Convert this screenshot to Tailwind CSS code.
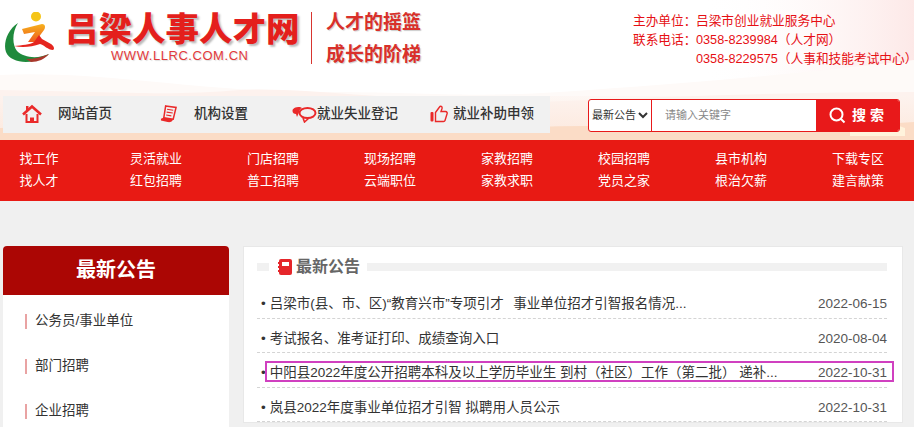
<!DOCTYPE html>
<html lang="zh-CN">
  <head>
    <meta charset="UTF-8" />
    <meta name="viewport" content="width=device-width, initial-scale=1.0" />
    <title>吕梁人事人才网</title>
    <script src="https://cdn.jsdelivr.net/npm/@tailwindcss/browser@4"></script>
  </head>
  <body class="bg-[#f0f0f0] font-['Liberation_Sans','Noto_Sans_CJK_SC',sans-serif] text-[#333]">
    <div class="relative h-[427px] overflow-hidden">

      <!-- header background -->
      <div class="relative h-[140px] bg-white">
        <svg class="absolute left-0 top-0" width="914" height="140" viewBox="0 0 914 140">
          <defs>
            <linearGradient id="corner" x1="0" y1="0" x2="1" y2="0">
              <stop offset="0" stop-color="#fff" stop-opacity="0" />
              <stop offset="1" stop-color="#fbd6d4" />
            </linearGradient>
            <linearGradient id="peach" x1="0" y1="0" x2="0" y2="1">
              <stop offset="0" stop-color="#fdf3ee" />
              <stop offset="1" stop-color="#fbdcc6" />
            </linearGradient>
          </defs>
          <rect x="700" y="0" width="214" height="100" fill="url(#corner)" opacity="0.55" />
          <path d="M0 75 C100 70 200 92 320 92 C420 92 470 98 560 92 C680 84 780 76 914 60 L914 140 L0 140 Z" fill="#fefaf8" />
          <path d="M0 90 C120 92 170 96 240 90 C300 86 420 104 540 102 C680 96 800 92 914 92 L914 140 L0 140 Z" fill="#fdf2ee" />
          <path d="M0 96 L914 96 L914 140 L0 140 Z" fill="url(#peach)" opacity="0.45" />
          <path d="M0 128 C160 124 340 136 500 128 C640 122 760 132 914 122 L914 140 L0 140 Z" fill="#fbdcc6" />
          <path d="M850 130 C870 122 890 122 905 128 L905 136 L850 136 Z" fill="#fff3dc" />
        </svg>

        <div class="relative flex h-[96px] items-start">
          <!-- logo -->
          <svg class="ml-[4px] mt-[12px] shrink-0" width="54" height="54" viewBox="0 0 54 54">
            <defs>
              <linearGradient id="torso" x1="0" y1="0" x2="0" y2="1">
                <stop offset="0" stop-color="#f7b21c" />
                <stop offset="1" stop-color="#ee5a1e" />
              </linearGradient>
            </defs>
            <path d="M14 11 C3 18 -1 32 2 40 C5 48 18 52 30 49 C36 48 42 45 45 42 C34 47 20 46 13 39 C8 33 8 20 14 11 Z" fill="#1f8a3c" />
            <path d="M22 47 C30 47 38 45 45 42 C41 47 34 50 27 50 Z" fill="#a9382c" />
            <circle cx="32" cy="4.5" r="5" fill="#f5c518" />
            <path d="M18 17 L38 12 C41 12 42 15 40 18 L31 30 L24 30 L31 20 L20 22 Z" fill="url(#torso)" />
            <path d="M10 34 C18 33 26 33 30 30 L35 23 L38 27 L47 32 C50 34 51 37 49 38 C44 38 40 33 36 32 C28 35 18 36 10 34 Z" fill="#e5261f" />
          </svg>
          <div class="ml-[7px] mt-[11px] w-[242px] shrink-0">
            <h1 class="whitespace-nowrap text-[33.5px] leading-[38px] font-black text-[#e41f1c] [text-shadow:2px_2px_2px_#bbb]">吕梁人事人才网</h1>
            <p class="ml-[46px] mt-[-1px] whitespace-nowrap text-[13px] leading-[16px] tracking-[0.55px] text-[#e2393a] [text-shadow:1px_1px_1px_#ddd]">WWW.LLRC.COM.CN</p>
          </div>
          <div class="ml-[4px] mt-[12px] h-[52px] w-px shrink-0 bg-[#d8352f]"></div>
          <div class="ml-[14px] mt-[7px] w-[100px] shrink-0 whitespace-nowrap text-[19px] leading-[32px] font-bold text-[#d9302a] [text-shadow:1px_1px_1px_#ccc]">
            <p>人才的摇篮</p>
            <p>成长的阶梯</p>
          </div>
          <div class="ml-[207px] mt-[12px] shrink-0 whitespace-nowrap text-[12.7px] leading-[19px] text-[#e60f14] [text-spacing-trim:trim-both]">
            <div class="flex"><span class="w-[63px]">主办单位：</span><span>吕梁市创业就业服务中心</span></div>
            <div class="flex"><span class="w-[63px]">联系电话：</span><span>0358-8239984（人才网）</span></div>
            <div class="flex"><span class="w-[63px]"></span><span>0358-8229575（人事和技能考试中心）</span></div>
          </div>
        </div>

        <!-- nav + search -->
        <div class="relative flex items-start pl-[3px]">
          <nav class="flex h-[37px] w-[547px] items-center bg-[#f1f1f1] pb-[1px] text-[13.5px] font-medium text-[#333]">
            <a class="flex items-center">
              <svg class="ml-[19px]" width="20" height="20" viewBox="0 0 20 20" fill="none" stroke="#ea2a2a" stroke-width="2">
                <path d="M1 10.5 L10 2.5 L19 10.5" stroke-width="2.6" />
                <path d="M4.5 10 V18 H15.5 V10" />
                <path d="M8 18 V13.5 H12 V18 Z" fill="#ea2a2a" stroke="none" />
                <path d="M4 2 H6.5 V5 L4 7 Z" fill="#ea2a2a" stroke="none" />
              </svg>
              <span class="ml-[16px]">网站首页</span>
            </a>
            <a class="flex items-center">
              <svg class="ml-[48px]" width="17" height="20" viewBox="0 0 18 20" fill="none" stroke="#ea2a2a" stroke-width="1.6">
                <path d="M6 1.5 L17 3 L14 15.5 L4 14 Z" />
                <path d="M1 15 C3 14 4 14 4 14 L14 15.5 C13 18 11 19 8 18.5 L1 17 Z" fill="#ea2a2a" stroke="none" />
                <path d="M7.5 5 L14 6 M7 8 L13.5 9 M6.5 11 L12 12" stroke-width="1.2" />
              </svg>
              <span class="ml-[17px]">机构设置</span>
            </a>
            <a class="flex items-center">
              <svg class="ml-[44px]" width="25" height="18" viewBox="0 0 25 18" fill="none" stroke="#ea2a2a" stroke-width="2">
                <ellipse cx="15.5" cy="8" rx="8" ry="5" />
                <path d="M11 13 L12.5 17 L17 13" stroke-width="1.6" />
                <path d="M8 2 C3 2 0.5 3.5 0.5 6 C0.5 8 2 9 4 9 L5 12 L7 7.5 C7 5.5 8 4 10 3 Z" fill="#ea2a2a" stroke="none" />
              </svg>
              <span>就业失业登记</span>
            </a>
            <a class="flex items-center">
              <svg class="ml-[32px]" width="18" height="18" viewBox="0 0 18 18" fill="none" stroke="#ea2a2a" stroke-width="1.4">
                <rect x="0.5" y="7" width="3" height="9.5" rx="1" fill="#ea2a2a" stroke="none" />
                <path d="M5.5 7.5 L9.5 2 C10.5 0.5 12.5 1.5 12 3.5 L11 6.5 H15.5 C17 6.5 17.5 8 17 9 L15 15.5 C14.8 16.2 14 16.5 13.5 16.5 H5.5 Z" />
              </svg>
              <span class="ml-[5px]">就业补助申领</span>
            </a>
          </nav>

          <form class="ml-[38px] mt-[3px] flex h-[33px] w-[312px] overflow-hidden rounded-[3px] border border-[#e8191a] bg-white">
            <div class="flex w-[63px] shrink-0 items-center border-r border-[#e8191a] pl-[3px] text-[11px] text-[#333]">
              <span class="whitespace-nowrap">最新公告</span>
              <svg class="ml-[2px]" width="10" height="7" viewBox="0 0 10 7" fill="none" stroke="#333" stroke-width="2"><path d="M1 1 L5 5 L9 1" /></svg>
            </div>
            <input class="w-[164px] pl-[13px] text-[11px] outline-none placeholder:text-[#888]" placeholder="请输入关键字" />
            <button class="flex flex-1 items-center bg-[#e8191a] pl-[13px] text-[14px] font-bold text-white" type="button">
              <svg width="17" height="17" viewBox="0 0 17 17" fill="none" stroke="#fff" stroke-width="2"><circle cx="7.5" cy="7.5" r="6" /><path d="M12 12 L15.5 15.5" /></svg>
              <span class="ml-[6px] whitespace-nowrap">搜 索</span>
            </button>
          </form>
        </div>
      </div>

      <!-- red link band -->
      <div class="flex h-[61px] gap-x-[65px] bg-[#e81a14] pl-[13px] pt-[8px] text-[13px] leading-[22px] text-white">
        <div class="w-[52px] shrink-0 whitespace-nowrap text-center"><p>找工作</p><p>找人才</p></div>
        <div class="w-[52px] shrink-0 whitespace-nowrap text-center"><p>灵活就业</p><p>红包招聘</p></div>
        <div class="w-[52px] shrink-0 whitespace-nowrap text-center"><p>门店招聘</p><p>普工招聘</p></div>
        <div class="w-[52px] shrink-0 whitespace-nowrap text-center"><p>现场招聘</p><p>云端职位</p></div>
        <div class="w-[52px] shrink-0 whitespace-nowrap text-center"><p>家教招聘</p><p>家教求职</p></div>
        <div class="w-[52px] shrink-0 whitespace-nowrap text-center"><p>校园招聘</p><p>党员之家</p></div>
        <div class="w-[52px] shrink-0 whitespace-nowrap text-center"><p>县市机构</p><p>根治欠薪</p></div>
        <div class="w-[52px] shrink-0 whitespace-nowrap text-center"><p>下载专区</p><p>建言献策</p></div>
      </div>

      <!-- content -->
      <div class="flex items-start gap-x-[14px] pl-[3px] pt-[45px]">
        <aside class="w-[226px] shrink-0 overflow-hidden rounded-t-[4px] bg-white">
          <h2 class="h-[49px] bg-[#ab0604] text-center text-[20px] leading-[49px] font-bold text-white">最新公告</h2>
          <ul class="pt-[4px] pb-[10px] text-[13.5px] text-[#333]">
            <li class="flex h-[45px] items-center pl-[22px]"><i class="h-[15px] w-[2px] bg-[#e9a3a3]"></i><span class="ml-[8px]">公务员/事业单位</span></li>
            <li class="flex h-[45px] items-center pl-[22px]"><i class="h-[15px] w-[2px] bg-[#e9a3a3]"></i><span class="ml-[8px]">部门招聘</span></li>
            <li class="flex h-[45px] items-center pl-[22px]"><i class="h-[15px] w-[2px] bg-[#e9a3a3]"></i><span class="ml-[8px]">企业招聘</span></li>
          </ul>
        </aside>

        <main class="w-[660px] shrink-0 border border-[#e8e8e8] bg-white pl-[13px] pr-[15px] pt-[9px]">
          <div class="flex h-[22px] items-center">
            <div class="h-[8px] w-[12px] bg-[#f1f1f1]"></div>
            <div class="flex items-center gap-x-[4px] pl-[9px] pr-[7px]">
              <svg width="14" height="16" viewBox="0 0 14 16">
                <rect x="1" y="0" width="13" height="16" rx="2" fill="#e5262a" />
                <rect x="0" y="3" width="2" height="2" fill="#e5262a" />
                <rect x="0" y="7" width="2" height="2" fill="#e5262a" />
                <rect x="0" y="11" width="2" height="2" fill="#e5262a" />
                <rect x="4" y="3" width="7" height="4" fill="#fff" />
              </svg>
              <h3 class="text-[16px] leading-[22px] font-bold text-[#666]">最新公告</h3>
            </div>
            <div class="h-[8px] flex-1 bg-[#f1f1f1]"></div>
          </div>
          <ul class="pt-[6px] text-[13.5px] text-[#333]">
            <li class="flex h-[34.6px] items-start justify-between border-b border-dashed border-[#d4d4d4] pt-[11px] leading-[18px]">
              <span class="whitespace-nowrap"><span class="pr-[4px] pl-[4px]">•</span>吕梁市(县、市、区)“教育兴市”专项引才&nbsp;&nbsp;<span class="ml-[2px]">事业单位招才引智报名情况...</span></span>
              <span class="text-[#555]">2022-06-15</span>
            </li>
            <li class="flex h-[34.6px] items-start justify-between border-b border-dashed border-[#d4d4d4] pt-[11px] leading-[18px]">
              <span class="whitespace-nowrap"><span class="pr-[4px] pl-[4px]">•</span>考试报名、准考证打印、成绩查询入口</span>
              <span class="text-[#555]">2020-08-04</span>
            </li>
            <li class="flex h-[34.6px] items-start justify-between border-b border-dashed border-[#d4d4d4] pt-[11px] leading-[18px]">
              <span class="whitespace-nowrap"><span class="pr-[4px] pl-[4px]">•</span>中阳县2022年度公开招聘本科及以上学历毕业生 到村（社区）工作（第二批） 递补...</span>
              <span class="text-[#555]">2022-10-31</span>
            </li>
            <li class="flex h-[34.6px] items-start justify-between border-b border-dashed border-[#d4d4d4] pt-[11px] leading-[18px]">
              <span class="whitespace-nowrap"><span class="pr-[4px] pl-[4px]">•</span>岚县2022年度事业单位招才引智 拟聘用人员公示</span>
              <span class="text-[#555]">2022-10-31</span>
            </li>
          </ul>
        </main>
      </div>

      <!-- highlight box over the third row -->
      <div class="pointer-events-none absolute left-[265px] top-[361px] h-[21px] w-[629px] border-2 border-[#d040c0]"></div>
    </div>
  </body>
</html>
